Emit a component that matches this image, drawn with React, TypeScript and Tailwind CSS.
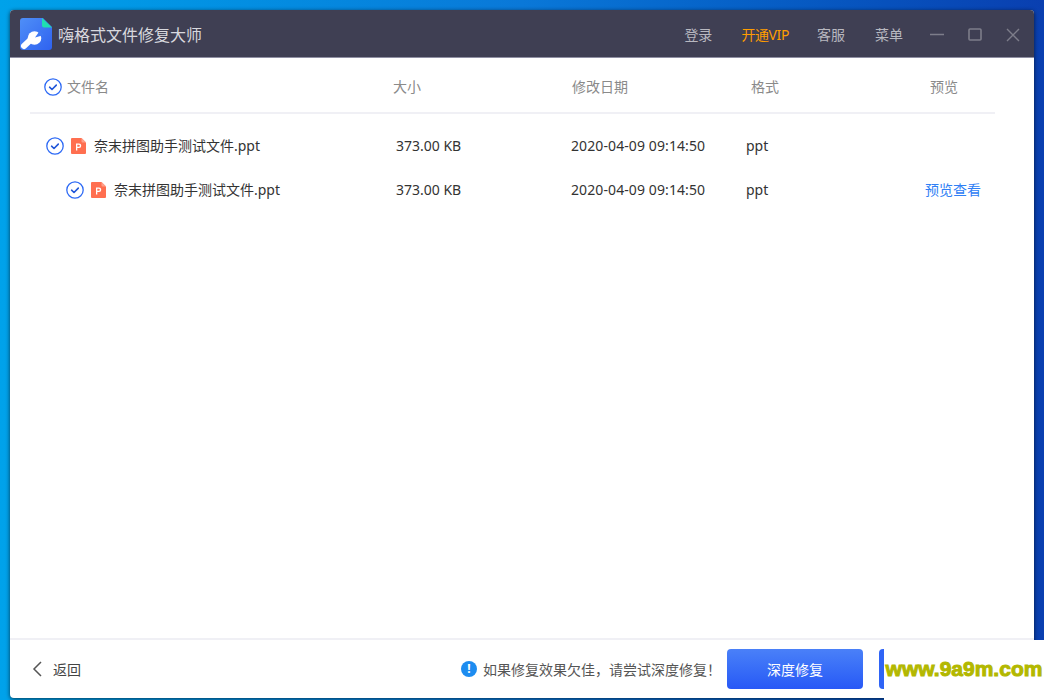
const font = "font-['Noto_Sans','Noto_Sans_CJK_SC',sans-serif]";

function Check() {
  return (
    <svg width="18" height="18" viewBox="0 0 18 18" fill="none" className="shrink-0">
      <circle cx="9" cy="9" r="8.2" stroke="#2f6bf5" strokeWidth="1.3" />
      <path d="M5.6 9.2l2.4 2.3 4.3-4.4" stroke="#1f55d8" strokeWidth="1.6" strokeLinecap="round" strokeLinejoin="round" />
    </svg>
  );
}

function PptIcon() {
  return (
    <svg width="15" height="16" viewBox="0 0 15 16" className="shrink-0">
      <path d="M1 0h9.5L15 4.5V15a1 1 0 0 1-1 1H1a1 1 0 0 1-1-1V1a1 1 0 0 1 1-1z" fill="#ff6f50" />
      <path d="M10.5 0L15 4.5h-3.5a1 1 0 0 1-1-1z" fill="#ffa08a" />
      <path d="M5 12.5V5.5h3a2.2 2.2 0 0 1 0 4.5H6.3V12.5zM6.3 6.7v2.1h1.5a1.05 1.05 0 0 0 0-2.1z" fill="#fff" fillRule="evenodd" />
    </svg>
  );
}

function Logo() {
  return (
    <svg width="32" height="32" viewBox="0 0 32 32" className="shrink-0">
      <defs>
        <linearGradient id="lg" x1="0" y1="0" x2="1" y2="1">
          <stop offset="0" stopColor="#4f8ff7" />
          <stop offset="1" stopColor="#2f62f0" />
        </linearGradient>
      </defs>
      <path d="M3 0h20l9 9v20a3 3 0 0 1-3 3H3a3 3 0 0 1-3-3V3a3 3 0 0 1 3-3z" fill="url(#lg)" />
      <path d="M22 0l10 9.5h-8a2 2 0 0 1-2-2z" fill="#1fe0b0" />
      <path d="M4 28L12 20.5" stroke="#fff" strokeWidth="6" strokeLinecap="round" />
      <circle cx="14.5" cy="20" r="6.8" fill="#fff" />
      <path d="M15 19.5L20 12.5L24 17z" fill="#3f78f4" />
    </svg>
  );
}

function Row({ indent, preview }: { indent: boolean; preview?: boolean }) {
  return (
    <div className={`flex h-11 items-center text-sm text-[#333333] ${indent ? "pl-[36px]" : "pl-4"}`}>
      <Check />
      <div className="ml-[7px]"><PptIcon /></div>
      <span className={`ml-[7px] ${indent ? "w-[282px]" : "w-[302px]"} pl-px`}>奈末拼图助手测试文件.ppt</span>
      <span className="w-[175px] pl-px">373.00 KB</span>
      <span className="w-[175px] pl-px tracking-[0.1px]">2020-04-09 09:14:50</span>
      <span className="w-[179px] pl-px">ppt</span>
      {preview && <span className="pl-px text-[#2f80f5]">预览查看</span>}
    </div>
  );
}

export default function App() {
  return (
    <div className={`relative h-[700px] w-[1044px] overflow-hidden bg-gradient-to-r from-[#00a2ea] via-[#0a78d8] to-[#0a3fb0] pl-[10px] pt-[10px] ${font}`}>
      <div className="flex h-[688px] w-[1024px] flex-col overflow-hidden rounded-[4px] bg-white shadow-[0_1px_4px_rgba(0,0,0,0.65)]">
        <div className="flex h-[48px] shrink-0 items-center border-b border-[#8f8fa3] bg-[#3f3f53] pl-[10px]">
          <Logo />
          <span className="ml-[6px] mt-[3px] text-base text-[#d8d8de]">嗨格式文件修复大师</span>
          <div className="ml-auto mt-[2px] flex items-center text-sm text-[#b8b8c0]">
            <span>登录</span>
            <span className="ml-[29px] tracking-[-0.4px] text-[#ff9d00]">开通VIP</span>
            <span className="ml-[28px]">客服</span>
            <span className="ml-[30px]">菜单</span>
            <svg width="14" height="14" viewBox="0 0 14 14" className="ml-[27px]"><path d="M0 6.5h14" stroke="#7d7d8a" strokeWidth="1.4" /></svg>
            <svg width="14" height="14" viewBox="0 0 14 14" className="ml-[24px]"><rect x="1" y="1" width="12" height="11" rx="1" fill="none" stroke="#7d7d8a" strokeWidth="1.6" /></svg>
            <svg width="14" height="14" viewBox="0 0 14 14" className="ml-[24px] mr-[14px]"><path d="M1 1l12 12M13 1L1 13" stroke="#7d7d8a" strokeWidth="1.4" /></svg>
          </div>
        </div>
        <div className="flex-1 pl-5 pr-[39px]">
          <div className="flex h-[56px] items-center border-b-2 border-[#f0f0f5] pl-[14px] pt-1 text-sm text-[#8a8a8a]">
            <Check />
            <span className="ml-[5px] w-[326px]">文件名</span>
            <span className="w-[179px]">大小</span>
            <span className="w-[179px]">修改日期</span>
            <span className="w-[179px]">格式</span>
            <span>预览</span>
          </div>
          <div className="pt-[10px]">
            <Row indent={false} />
            <Row indent preview />
          </div>
        </div>
        <div className="flex h-[60px] shrink-0 items-center border-t-2 border-[#f0f0f5] pl-[22px] text-sm text-[#555555]">
          <svg width="10" height="16" viewBox="0 0 10 16" fill="none"><path d="M9 1L2 8l7 7" stroke="#555" strokeWidth="1.5" /></svg>
          <span className="ml-[11px] mt-[2px] text-[#444444]">返回</span>
          <div className="ml-auto flex items-center">
            <span className="flex h-4 w-4 items-center justify-center rounded-full bg-[#1d8cf0] text-xs font-bold text-white">!</span>
            <span className="ml-[6px] mt-[2px]">如果修复效果欠佳，请尝试深度修复！</span>
            <button className="ml-[6px] h-10 w-[136px] rounded-[4px] bg-gradient-to-b from-[#4a80f8] to-[#2858f6] pt-[2px] text-sm text-white">深度修复</button>
            <div className="ml-4 h-10 w-[155px] rounded-l-[4px] bg-[#2f64f6]" />
          </div>
        </div>
      </div>
      <div className="absolute bottom-0 right-0 flex h-[60px] w-[160px] items-center justify-center bg-white pb-[3px] font-['Liberation_Sans',sans-serif] text-[21px] font-bold whitespace-nowrap text-[#b3b800] [-webkit-text-stroke:1px_#b3b800]">www.9a9m.com</div>
    </div>
  );
}
